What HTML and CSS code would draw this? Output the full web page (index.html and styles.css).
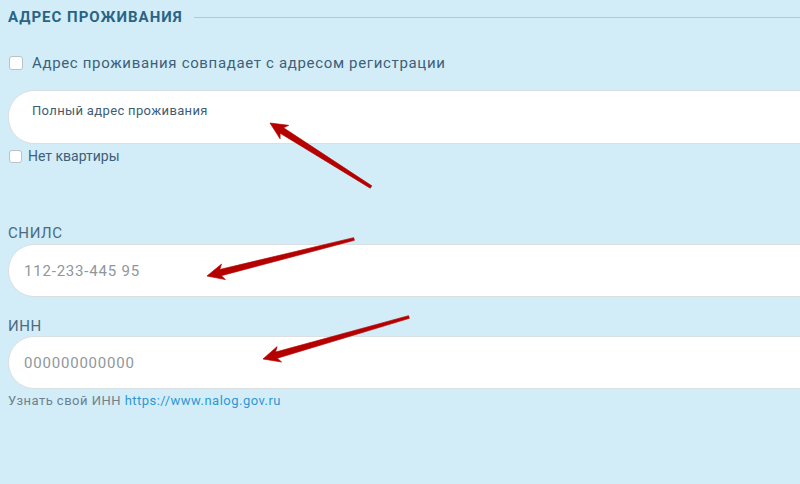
FILE: index.html
```html
<!DOCTYPE html>
<html lang="ru">
<head>
<meta charset="utf-8">
<title>Адрес проживания</title>
<link rel="stylesheet" href="styles.css">
</head>
<body>
<div class="form">
  <div class="section-title">
    <span class="section-title__text">АДРЕС ПРОЖИВАНИЯ</span>
    <span class="section-title__rule"></span>
  </div>

  <label class="check check--main"><span class="check__box"></span><span class="check__label">Адрес проживания совпадает с адресом регистрации</span></label>

  <div class="field field--area"><span class="field__hint">Полный адрес проживания</span></div>

  <label class="check check--small"><span class="check__box"></span><span class="check__label">Нет квартиры</span></label>

  <div class="label label--snils">СНИЛС</div>
  <div class="field field--line"><span class="field__placeholder">112-233-445 95</span></div>

  <div class="label label--inn">ИНН</div>
  <div class="field field--line"><span class="field__placeholder">000000000000</span></div>

  <div class="help">Узнать свой ИНН <a class="help__link" href="#">https://www.nalog.gov.ru</a></div>

  <svg class="arrows" width="800" height="484" viewBox="0 0 800 484">
    <g fill="#b50000" stroke="#b50000" stroke-width="0.6" stroke-linejoin="round">
      <polygon transform="translate(270 123) rotate(-147.64)" points="0,0 -17,-8 -14,-3.2 -119.6,-1.4 -119.6,1.4 -14,3.2 -17,8"/>
      <polygon transform="translate(207 276) rotate(165.87)" points="0,0 -17,-8 -14,-3.2 -151.6,-1.4 -151.6,1.4 -14,3.2 -17,8"/>
      <polygon transform="translate(263 359) rotate(163.95)" points="0,0 -17,-8 -14,-3.2 -151.9,-1.4 -151.9,1.4 -14,3.2 -17,8"/>
    </g>
  </svg>
</div>
</body>
</html>
```

FILE: styles.css
```css
html, body {
  margin: 0;
  padding: 0;
  background: #d2edf8;
  overflow: hidden;
}

body {
  width: 800px;
  height: 484px;
  font-family: Roboto, "Liberation Sans", sans-serif;
}

.form {
  position: relative;
  width: 800px;
  height: 484px;
  padding-left: 8px;
  box-sizing: border-box;
  display: flex;
  flex-direction: column;
  align-items: flex-start;
  overflow: hidden;
}

.section-title {
  margin-top: 9px;
  width: 792px;
  display: flex;
  align-items: center;
  height: 16px;
}

.section-title__text {
  font-size: 15px;
  line-height: 16px;
  font-weight: 700;
  letter-spacing: 1px;
  color: #2a6485;
  white-space: nowrap;
}

.section-title__rule {
  flex: 1;
  height: 1px;
  background: #9fcfe7;
  margin-left: 11px;
}

.check {
  display: flex;
  align-items: center;
  white-space: nowrap;
}

.check__box {
  box-sizing: border-box;
  background: #fff;
  border: 1px solid #b9c2c8;
  border-radius: 3px;
}

.check--main {
  margin-top: 28px;
  height: 20px;
  font-size: 15px;
  line-height: 20px;
  letter-spacing: 0.66px;
  color: #3e6079;
}

.check--main .check__box {
  width: 14px;
  height: 14px;
  margin-left: 1px;
  margin-right: 9px;
}

.check--small {
  margin-top: 4px;
  height: 16px;
  font-size: 14px;
  line-height: 16px;
  color: #3e6079;
}

.check--small .check__box {
  width: 13px;
  height: 13px;
  margin-left: 1px;
  margin-right: 6px;
}

.field {
  box-sizing: border-box;
  width: 900px;
  flex-shrink: 0;
  background: #fff;
  border: 1px solid #dadfe2;
  border-radius: 26px;
}

.field--area {
  margin-top: 17px;
  height: 54px;
  padding: 9px 0 0 23px;
}

.field__hint {
  font-size: 13px;
  line-height: 16px;
  letter-spacing: 0.35px;
  color: #3d5d74;
}

.field--line {
  height: 53px;
  display: flex;
  align-items: center;
  padding-left: 15px;
}

.field__placeholder {
  font-size: 15px;
  line-height: 18px;
  letter-spacing: 0.8px;
  color: #8f979d;
}

.label {
  font-size: 15px;
  line-height: 18px;
  letter-spacing: 0.6px;
  color: #4a6b82;
}

.label--snils {
  margin-top: 60px;
  margin-bottom: 2px;
}

.label--inn {
  margin-top: 20px;
  margin-bottom: 1px;
}

.help {
  margin-top: 4px;
  font-size: 13px;
  line-height: 16px;
  letter-spacing: 0.48px;
  color: #6d818e;
  white-space: nowrap;
}

.help__link {
  color: #2f97d4;
  text-decoration: none;
}

.arrows {
  position: absolute;
  left: 0;
  top: 0;
  pointer-events: none;
}
```
